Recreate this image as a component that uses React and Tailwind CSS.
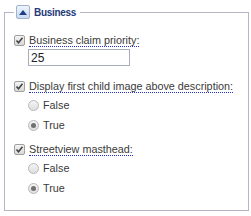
import React, { useState } from 'react';

function Check({ checked }) {
  return (
    <span className="flex items-center justify-center w-[11px] h-[11px] border border-[#a0a0a0] rounded-[2px] bg-gradient-to-b from-[#f4f4f4] to-[#d8d8d8] shrink-0">
      {checked && (
        <svg width="9" height="9" viewBox="0 0 9 9">
          <path d="M1.5 4.5 L3.5 6.8 L7.5 1.8" fill="none" stroke="#444" strokeWidth="1.6" />
        </svg>
      )}
    </span>
  );
}

function Radio({ checked }) {
  return (
    <span className="flex items-center justify-center w-[11px] h-[11px] rounded-full border border-[#b8b8b8] bg-gradient-to-b from-[#f4f4f4] to-[#dedede] shrink-0">
      {checked && <span className="w-[5px] h-[5px] rounded-full bg-[#707070]" />}
    </span>
  );
}

function Label({ children }) {
  return (
    <span className="border-b border-dotted border-[#2030c0] leading-[13px] text-[#3a3a3a]">{children}</span>
  );
}

function CheckRow({ label, className }) {
  return (
    <div className={"flex items-center h-[18px] " + (className || '')}>
      <Check checked />
      <span className="ml-[4px]"><Label>{label}</Label></span>
    </div>
  );
}

function RadioGroup({ value }) {
  return (
    <div className="pl-[14px]">
      {['False', 'True'].map(opt => (
        <div key={opt} className="flex items-center h-[20px]">
          <Radio checked={value === opt} />
          <span className="ml-[4px] text-[#3a3a3a]">{opt}</span>
        </div>
      ))}
    </div>
  );
}

export default function App() {
  const [priority, setPriority] = useState('25');

  return (
    <div className="w-[251px] h-[216px] bg-white pt-[4px] pl-[4px]" style={{ fontFamily: '"Liberation Sans", Arial, sans-serif' }}>
      <fieldset className="w-[245px] h-[207px] border border-[#b4b6c6] pl-[9px] pr-[8px] pt-[11px] m-0 text-[10.8px]">
        <legend className="flex items-center h-[16px] px-[2px]">
          <span className="flex items-center justify-center w-[14px] h-[14px] rounded-[2px] border border-[#9fb3cf] bg-gradient-to-b from-[#eef4fc] to-[#c9daf0]">
            <svg width="8" height="5" viewBox="0 0 8 5">
              <path d="M0 5 L4 0 L8 5 Z" fill="#1e3f86" />
            </svg>
          </span>
          <span className="ml-[4px] mr-[2px] font-bold text-[#1e3a7a] text-[10px] tracking-[-0.3px]">Business</span>
        </legend>

        <CheckRow label="Business claim priority:" />
        <input
          type="text"
          value={priority}
          onChange={e => setPriority(e.target.value)}
          className="block ml-[14px] w-[102px] h-[17px] border border-[#a9adbb] px-[2px] text-[12px] text-[#222] outline-none"
        />

        <CheckRow label="Display first child image above description:" className="mt-[11px]" />
        <RadioGroup value="True" />

        <CheckRow label="Streetview masthead:" className="mt-[5px]" />
        <RadioGroup value="True" />
      </fieldset>
    </div>
  );
}
